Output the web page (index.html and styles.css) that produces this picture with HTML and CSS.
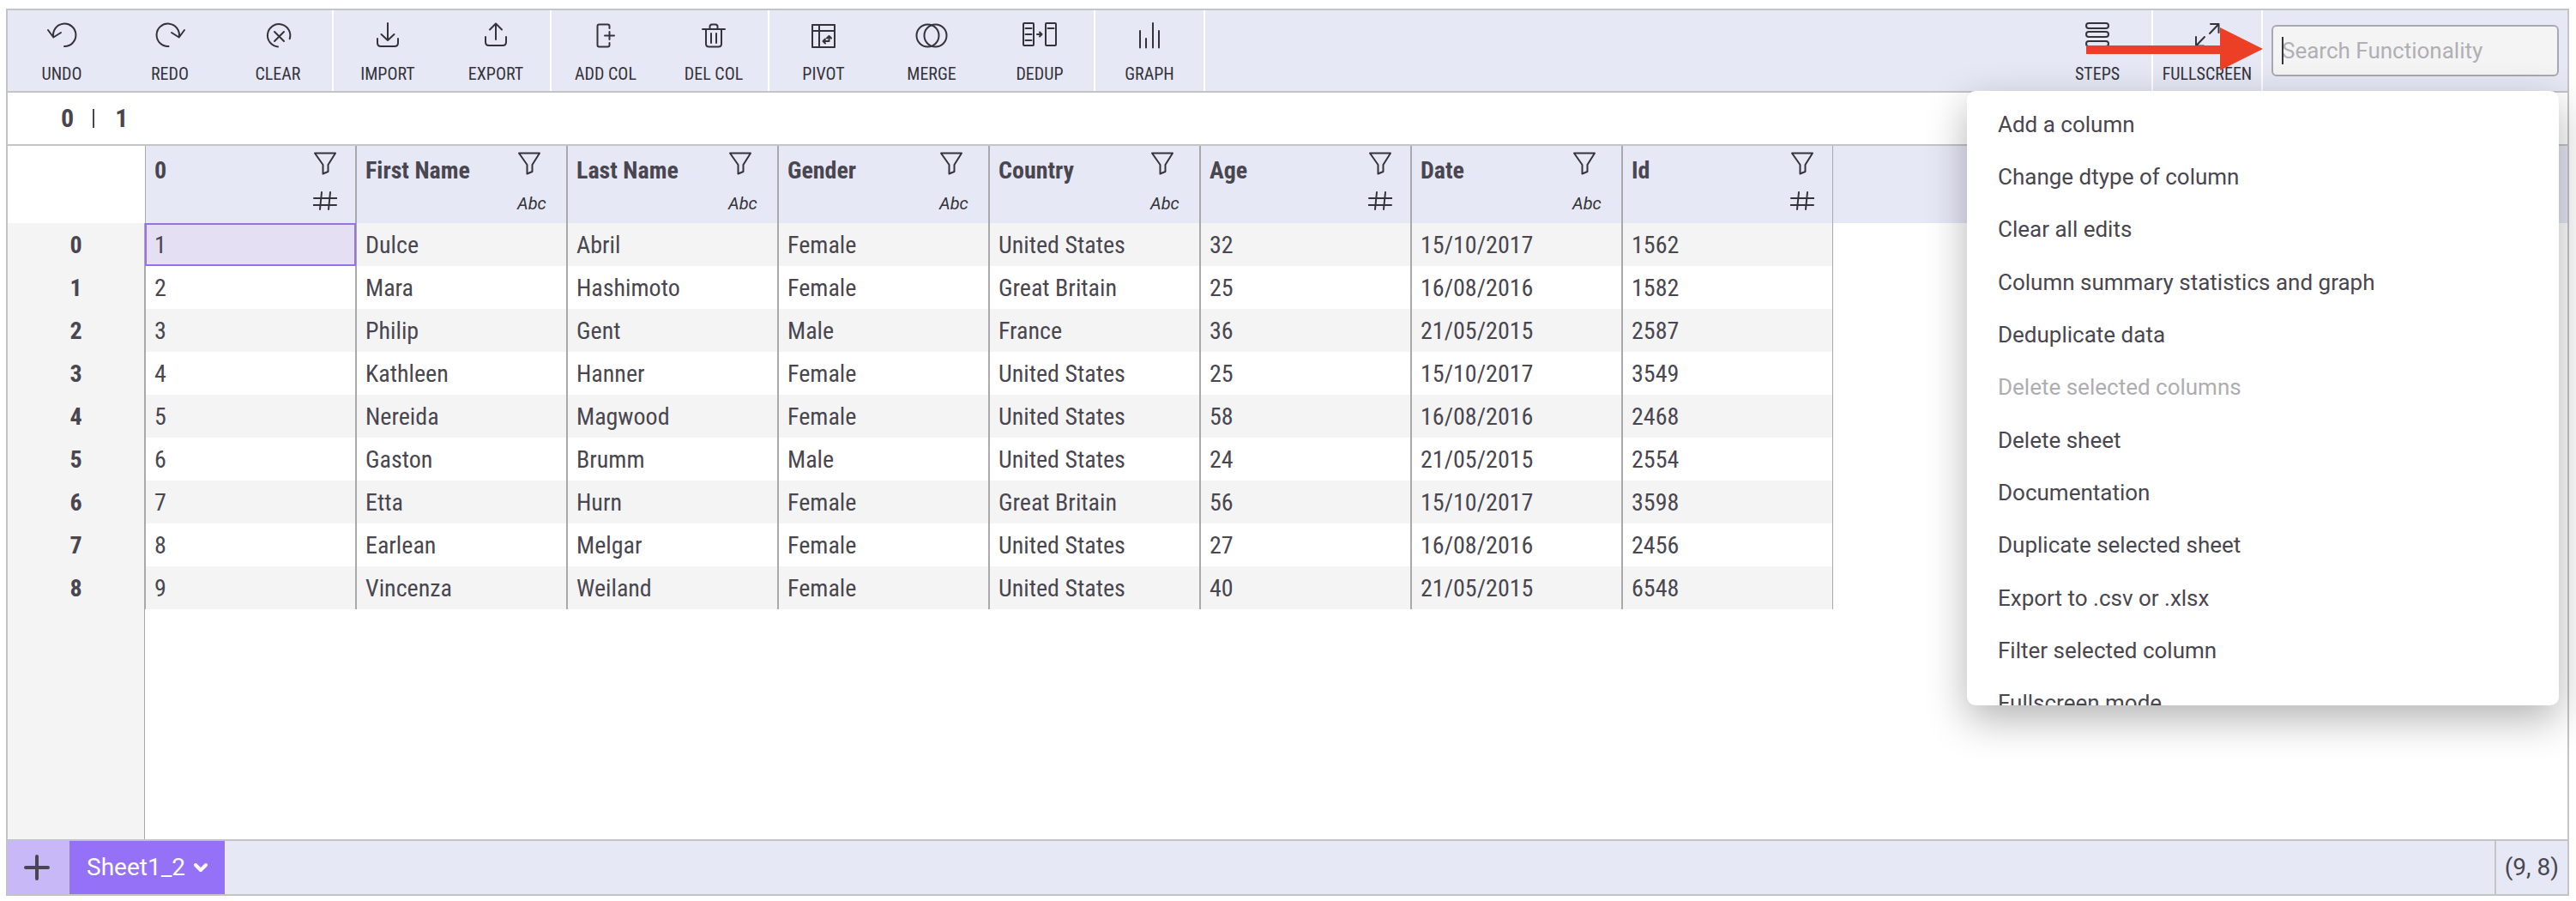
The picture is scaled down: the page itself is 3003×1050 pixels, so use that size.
FILE: index.html
```
<!DOCTYPE html>
<html lang="en">
<head>
<meta charset="utf-8">
<title>Sheet1_2</title>
<link rel="stylesheet" href="styles.css">
</head>
<body>
<svg class="symbols" aria-hidden="true">
  <symbol id="funnel" viewBox="0 0 28 30"><path d="M2 2.500H26L17.500 16V24L11.500 26.500V16Z"/></symbol>
  <symbol id="hash" viewBox="0 0 28 30"><path d="M1 9H28M0 17H27M10 2L8 22M20 2L18 22"/></symbol>
</svg>
<main class="window">
  <header class="toolbar">
    <div class="group">
      <button class="tool" type="button"><svg class="icon" viewBox="0 0 40 32"><path d="M23 29A13.200 13.200 0 1 0 10.300 18.500M4 10L10.300 18.500L19 13"/></svg>Undo</button>
      <button class="tool" type="button"><svg class="icon" viewBox="0 0 40 32"><path d="M18.500 29A13.200 13.200 0 1 1 30.700 18.500M22 13L30.700 18.500L37 10"/></svg>Redo</button>
      <button class="tool" type="button"><svg class="icon" viewBox="0 0 40 32"><path d="M20 29.500A13.200 13.200 0 1 1 33.700 20.300M16 12L27 23M27 12L16 23"/></svg>Clear</button>
    </div>
    <div class="group">
      <button class="tool" type="button"><svg class="icon" viewBox="0 0 40 32"><path d="M20 2V22M12.500 15L20 22L27.500 15M8 20V25Q8 29 12 29H28Q32 29 32 25V20"/></svg>Import</button>
      <button class="tool" type="button"><svg class="icon" viewBox="0 0 40 32"><path d="M20 21V3M13 9.500L20 2.500L27 9.500M8 18V24Q8 28 12 28H28Q32 28 32 24V18"/></svg>Export</button>
    </div>
    <div class="group">
      <button class="tool" type="button"><svg class="icon" viewBox="0 0 40 32"><path d="M24.500 8V5.500Q24.500 3.500 22.500 3.500H12.500Q10.500 3.500 10.500 5.500V27.500Q10.500 29.500 12.500 29.500H22.500Q24.500 29.500 24.500 27.500V25M24.500 12V21M19 16.500H30"/></svg>Add Col</button>
      <button class="tool" type="button"><svg class="icon" viewBox="0 0 40 32"><path d="M7 9H33M15.500 9V6Q15.500 3.500 18 3.500H22Q24.500 3.500 24.500 6V9M11 9V26Q11 29.500 14.500 29.500H25.500Q29 29.500 29 26V9M17 14V25M23 14V25"/></svg>Del Col</button>
    </div>
    <div class="group">
      <button class="tool" type="button"><svg class="icon" viewBox="0 0 40 32"><path d="M7 4H33V30H7ZM7 11H33M15 4V30M20 23H26.500V18M22 20.500L19.500 23L22 25.500M24 19.500L26.500 17L29 19.500"/></svg>Pivot</button>
      <button class="tool" type="button"><svg class="icon" viewBox="0 0 40 32"><circle cx="15.500" cy="16.500" r="13"/><circle cx="24.500" cy="16.500" r="13"/></svg>Merge</button>
      <button class="tool" type="button"><svg class="icon" viewBox="0 0 40 32"><rect x="1" y="2" width="12" height="26" rx="1"/><rect x="27" y="2" width="12" height="26" rx="1"/><path d="M3.500 8H10.500M3.500 15H10.500M3.500 22H10.500M29.500 8H36.500M17 15H22M20 12.500L22.500 15L20 17.500"/></svg>Dedup</button>
    </div>
    <div class="group">
      <button class="tool" type="button"><svg class="icon" viewBox="0 0 40 32"><path d="M9 11V30.500M16 20V30.500M24 2V30.500M31 11V30.500"/></svg>Graph</button>
    </div>
    <div class="group group-right">
      <button class="tool" type="button"><svg class="icon" viewBox="0 0 40 32"><rect x="7" y="2" width="26" height="6" rx="3"/><rect x="7" y="12" width="26" height="6" rx="3"/><rect x="7" y="23" width="26" height="6" rx="3"/></svg>Steps</button>
    </div>
    <div class="group">
      <button class="tool" type="button"><svg class="icon" viewBox="0 0 40 32"><path d="M23 14L33.500 3M24 3H33.500V13M17 18L7 28.500M7 18V28.500H16"/></svg>Fullscreen</button>
    </div>
    <div class="search">
      <input class="search-box" type="text" placeholder="Search Functionality" aria-label="Search Functionality">
      <span class="caret"></span>
      <svg class="pointer" viewBox="0 0 206 50" aria-hidden="true"><path d="M0 21H156V0L206 25L156 50V31H0Z"/></svg>
      <div class="menu">
        <ul class="menu-list">
          <li><button type="button">Add a column</button></li>
          <li><button type="button">Change dtype of column</button></li>
          <li><button type="button">Clear all edits</button></li>
          <li><button type="button">Column summary statistics and graph</button></li>
          <li><button type="button">Deduplicate data</button></li>
          <li><button type="button" disabled>Delete selected columns</button></li>
          <li><button type="button">Delete sheet</button></li>
          <li><button type="button">Documentation</button></li>
          <li><button type="button">Duplicate selected sheet</button></li>
          <li><button type="button">Export to .csv or .xlsx</button></li>
          <li><button type="button">Filter selected column</button></li>
          <li><button type="button">Fullscreen mode</button></li>
        </ul>
      </div>
    </div>
  </header>

  <section class="formula-bar"><span>0</span><span class="bar"></span><span>1</span></section>

  <section class="sheet">
    <table class="grid">
      <colgroup><col class="col-index"><col class="col-data" span="8"><col></colgroup>
      <thead>
        <tr>
          <td class="corner"></td>
          <th scope="col"><div class="head"><span>0</span><span class="marks"><svg class="mark"><use href="#funnel"/></svg><svg class="mark"><use href="#hash"/></svg></span></div></th>
          <th scope="col"><div class="head"><span>First Name</span><span class="marks"><svg class="mark"><use href="#funnel"/></svg><i>Abc</i></span></div></th>
          <th scope="col"><div class="head"><span>Last Name</span><span class="marks"><svg class="mark"><use href="#funnel"/></svg><i>Abc</i></span></div></th>
          <th scope="col"><div class="head"><span>Gender</span><span class="marks"><svg class="mark"><use href="#funnel"/></svg><i>Abc</i></span></div></th>
          <th scope="col"><div class="head"><span>Country</span><span class="marks"><svg class="mark"><use href="#funnel"/></svg><i>Abc</i></span></div></th>
          <th scope="col"><div class="head"><span>Age</span><span class="marks"><svg class="mark"><use href="#funnel"/></svg><svg class="mark"><use href="#hash"/></svg></span></div></th>
          <th scope="col"><div class="head"><span>Date</span><span class="marks"><svg class="mark"><use href="#funnel"/></svg><i>Abc</i></span></div></th>
          <th scope="col"><div class="head"><span>Id</span><span class="marks"><svg class="mark"><use href="#funnel"/></svg><svg class="mark"><use href="#hash"/></svg></span></div></th>
          <td class="rest"></td>
        </tr>
      </thead>
      <tbody>
        <tr><th scope="row">0</th><td class="selected">1</td><td>Dulce</td><td>Abril</td><td>Female</td><td>United States</td><td>32</td><td>15/10/2017</td><td>1562</td></tr>
        <tr><th scope="row">1</th><td>2</td><td>Mara</td><td>Hashimoto</td><td>Female</td><td>Great Britain</td><td>25</td><td>16/08/2016</td><td>1582</td></tr>
        <tr><th scope="row">2</th><td>3</td><td>Philip</td><td>Gent</td><td>Male</td><td>France</td><td>36</td><td>21/05/2015</td><td>2587</td></tr>
        <tr><th scope="row">3</th><td>4</td><td>Kathleen</td><td>Hanner</td><td>Female</td><td>United States</td><td>25</td><td>15/10/2017</td><td>3549</td></tr>
        <tr><th scope="row">4</th><td>5</td><td>Nereida</td><td>Magwood</td><td>Female</td><td>United States</td><td>58</td><td>16/08/2016</td><td>2468</td></tr>
        <tr><th scope="row">5</th><td>6</td><td>Gaston</td><td>Brumm</td><td>Male</td><td>United States</td><td>24</td><td>21/05/2015</td><td>2554</td></tr>
        <tr><th scope="row">6</th><td>7</td><td>Etta</td><td>Hurn</td><td>Female</td><td>Great Britain</td><td>56</td><td>15/10/2017</td><td>3598</td></tr>
        <tr><th scope="row">7</th><td>8</td><td>Earlean</td><td>Melgar</td><td>Female</td><td>United States</td><td>27</td><td>16/08/2016</td><td>2456</td></tr>
        <tr><th scope="row">8</th><td>9</td><td>Vincenza</td><td>Weiland</td><td>Female</td><td>United States</td><td>40</td><td>21/05/2015</td><td>6548</td></tr>
      </tbody>
    </table>
    <div class="index-fill"></div>
  </section>

  <footer class="footer">
    <button class="add-sheet" type="button" aria-label="Add sheet"><svg viewBox="0 0 28 28"><path d="M14 1V27M1 14H27"/></svg></button>
    <button class="tab" type="button">Sheet1_2<svg viewBox="0 0 16 12"><path d="M2 3L8 9L14 3"/></svg></button>
    <span class="shape">(9, 8)</span>
  </footer>
</main>
</body>
</html>
```
FILE: styles.css
```
* {
  box-sizing: border-box;
}

body {
  display: flex;
  min-height: 100vh;
  margin: 0;
  padding: 10px 8px 6px 7px;
  background: #fff;
  color: #494650;
  font: 28px/32px "Roboto Condensed", Roboto, sans-serif;
}

button {
  margin: 0;
  padding: 0;
  border: 0;
  background: none;
  color: inherit;
  font: inherit;
}

svg {
  fill: none;
  stroke: #343339;
  stroke-width: 2;
  stroke-linecap: round;
  stroke-linejoin: round;
}

.symbols {
  position: absolute;
  width: 0;
  height: 0;
}

.window {
  display: flex;
  flex: 1;
  flex-direction: column;
  min-width: 0;
  border: 2px solid #c4c4c6;
}

/* Toolbar */

.toolbar {
  display: flex;
  height: 96px;
  border-bottom: 2px solid #c4c4c6;
  background: #e7e8f6;
}

.group {
  display: flex;
  border-right: 2px solid #fff;
}

.group-right {
  margin-left: auto;
}

.tool {
  display: flex;
  flex-direction: column;
  align-items: center;
  gap: 17px;
  width: 126px;
  padding-top: 13px;
  color: #343339;
  font-size: 20px;
  line-height: 24px;
  text-transform: uppercase;
}

.icon {
  width: 40px;
  height: 32px;
}

.search {
  position: relative;
  display: flex;
  align-items: center;
  padding: 0 10px;
  font-family: Roboto, sans-serif;
  font-size: 26px;
}

.search-box {
  width: 335px;
  height: 60px;
  padding: 0 10px;
  border: 2px solid #a9a9ad;
  border-radius: 6px;
  outline: 0;
  background: #f4f4f4;
  color: #494650;
  font: inherit;
}

.search-box::placeholder {
  color: #b0afb4;
}

.caret {
  position: absolute;
  top: 31px;
  left: 22px;
  width: 2px;
  height: 32px;
  background: #343339;
}

.pointer {
  position: absolute;
  top: 20px;
  right: 100%;
  width: 206px;
  height: 50px;
  fill: #eb4025;
  stroke: none;
}

.menu {
  position: absolute;
  z-index: 1;
  top: 100%;
  right: 10px;
  width: 690px;
  height: 716px;
  overflow: hidden;
  border-radius: 10px;
  background: #fff;
  box-shadow: 0 16px 48px rgba(0, 0, 0, 0.3);
}

.menu-list {
  display: grid;
  grid-auto-rows: 1fr;
  height: 744px;
  margin: 0;
  padding: 8px 0 0;
  list-style: none;
}

.menu-list li {
  display: flex;
}

.menu-list button {
  flex: 1;
  padding: 0 36px;
  text-align: left;
}

.menu-list button:disabled {
  color: #aeadb1;
}

/* Formula bar */

.formula-bar {
  display: flex;
  align-items: center;
  height: 62px;
  padding-left: 62px;
  border-bottom: 2px solid #c4c4c6;
  font-size: 30px;
  font-weight: 700;
}

.bar {
  width: 2px;
  height: 22px;
  margin: 0 24px 0 22px;
  background: #494650;
}

/* Sheet */

.sheet {
  display: flex;
  flex: 1;
  flex-direction: column;
}

.grid {
  width: 100%;
  border-spacing: 0;
  table-layout: fixed;
}

.col-index {
  width: 160px;
}

.col-data {
  width: 246px;
}

thead th {
  height: 90px;
  padding: 0;
  border: 1px solid #a9a9ad;
  border-width: 0 1px;
  background: #e7e8f6;
  vertical-align: top;
  text-align: left;
}

.head {
  display: flex;
  justify-content: space-between;
  padding: 6px 21px 0 10px;
}

.head > span:first-child {
  padding-top: 7px;
}

.marks {
  display: flex;
  flex-direction: column;
  gap: 16px;
}

.marks i {
  width: 36px;
  color: #343339;
  font: italic 20px/30px Roboto, sans-serif;
}

.mark {
  width: 28px;
  height: 30px;
}

.rest {
  background: #e7e8f6;
}

tbody th,
tbody td {
  height: 50px;
  padding: 2px 10px 0;
  border: 1px solid #a9a9ad;
  border-width: 0 1px;
}

tbody th {
  border-left: 0;
  background: #f4f4f4;
}

tbody tr:nth-child(odd) td {
  background: #f4f4f4;
}

.grid tbody .selected {
  outline: 2px solid #9671e8;
  outline-offset: -2px;
  background: #e5dff4;
}

.index-fill {
  flex: 1;
  width: 160px;
  border-right: 1px solid #a9a9ad;
  background: #f4f4f4;
}

/* Footer */

.footer {
  display: flex;
  height: 64px;
  border-top: 2px solid #c4c4c6;
  background: #e7e8f6;
  font-family: Roboto, sans-serif;
}

.add-sheet {
  display: flex;
  align-items: center;
  justify-content: center;
  width: 72px;
  padding-right: 4px;
  border-right: 1px solid #c4c4c6;
  background: #c9b8f7;
}

.add-sheet svg {
  width: 28px;
  height: 28px;
  overflow: visible;
  stroke: #494650;
  stroke-width: 4;
}

.tab {
  display: flex;
  align-items: center;
  gap: 10px;
  padding: 0 20px;
  background: #9571f7;
  color: #fff;
}

.tab svg {
  width: 16px;
  height: 12px;
  stroke: #fff;
  stroke-width: 4;
}

.shape {
  display: flex;
  align-items: center;
  margin-left: auto;
  padding: 0 10px;
  border-left: 2px solid #c4c4c6;
}
```
